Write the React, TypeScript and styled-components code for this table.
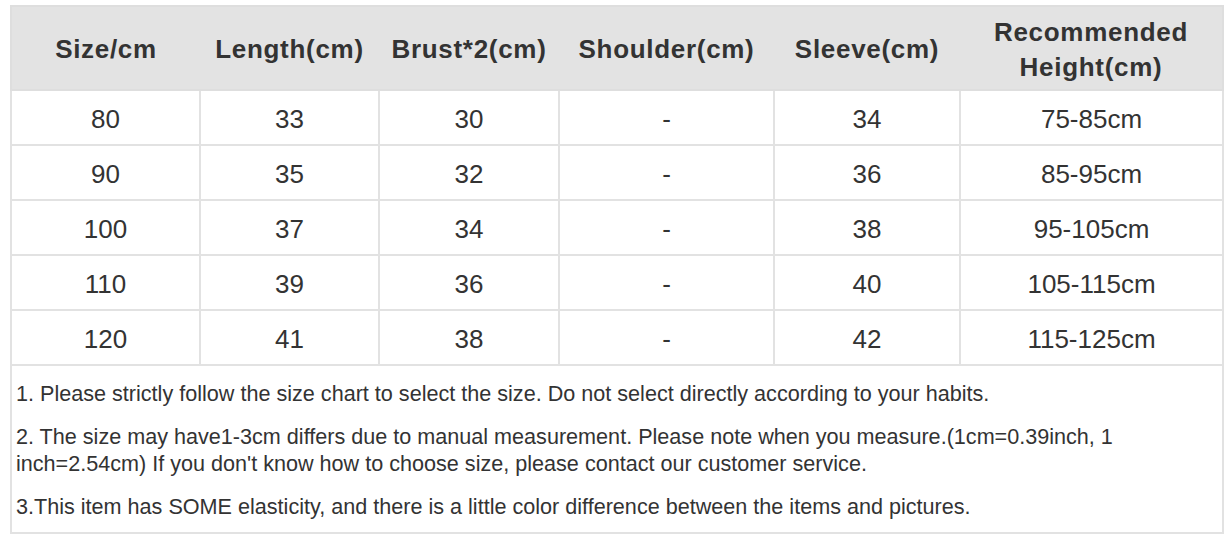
import React from "react";
import styled, { createGlobalStyle } from "styled-components";

const GlobalStyle = createGlobalStyle`
  html, body { margin: 0; padding: 0; background: #ffffff; }
  body { font-family: "Liberation Sans", Arial, sans-serif; color: #333333; }
`;

const Page = styled.div`
  padding: 5px 9px 0 10px;
  width: 1212px;
`;

const Table = styled.table`
  width: 1212px;
  border-collapse: collapse;
  table-layout: fixed;
  border: 2px solid #dedede;
`;

const HeadCell = styled.th`
  background: #e3e3e3;
  height: 79px;
  padding: 3px 0 0 0;
  font-weight: bold;
  font-size: 26px;
  letter-spacing: 0.7px;
  line-height: 35px;
  color: #333333;
  text-align: center;
  vertical-align: middle;
  border-bottom: 2px solid #dedede;
`;

const Cell = styled.td`
  height: 50px;
  padding: 3px 0 0 0;
  font-size: 26px;
  color: #333333;
  text-align: center;
  vertical-align: middle;
  border: 2px solid #e2e2e2;
`;

const NotesCell = styled.td`
  padding: 14px 4px 12px 4px;
  border: 2px solid #e2e2e2;
`;

const Note = styled.p`
  margin: 0 0 16px 0;
  font-size: 21.6px;
  line-height: 27px;
  color: #333333;
  &:last-child { margin-bottom: 0; }
`;

const widths = [189, 179, 180, 215, 186, 263];
const headers: React.ReactNode[] = [
  "Size/cm",
  "Length(cm)",
  "Brust*2(cm)",
  "Shoulder(cm)",
  "Sleeve(cm)",
  <>Recommended<br />Height(cm)</>,
];

const rows = [
  ["80", "33", "30", "-", "34", "75-85cm"],
  ["90", "35", "32", "-", "36", "85-95cm"],
  ["100", "37", "34", "-", "38", "95-105cm"],
  ["110", "39", "36", "-", "40", "105-115cm"],
  ["120", "41", "38", "-", "42", "115-125cm"],
];

const notes = [
  "1. Please strictly follow the size chart to select the size. Do not select directly according to your habits.",
  "2. The size may have1-3cm differs due to manual measurement. Please note when you measure.(1cm=0.39inch, 1 inch=2.54cm) If you don't know how to choose size, please contact our customer service.",
  "3.This item has SOME elasticity, and there is a little color difference between the items and pictures.",
];

export default function App() {
  return (
    <>
      <GlobalStyle />
      <Page>
        <Table>
          <colgroup>
            {widths.map((w, i) => (
              <col key={i} style={{ width: w }} />
            ))}
          </colgroup>
          <thead>
            <tr>
              {headers.map((h, i) => (
                <HeadCell key={i}>{h}</HeadCell>
              ))}
            </tr>
          </thead>
          <tbody>
            {rows.map((r, i) => (
              <tr key={i}>
                {r.map((c, j) => (
                  <Cell key={j}>{c}</Cell>
                ))}
              </tr>
            ))}
            <tr>
              <NotesCell colSpan={6}>
                {notes.map((n, i) => (
                  <Note key={i}>{n}</Note>
                ))}
              </NotesCell>
            </tr>
          </tbody>
        </Table>
      </Page>
    </>
  );
}
